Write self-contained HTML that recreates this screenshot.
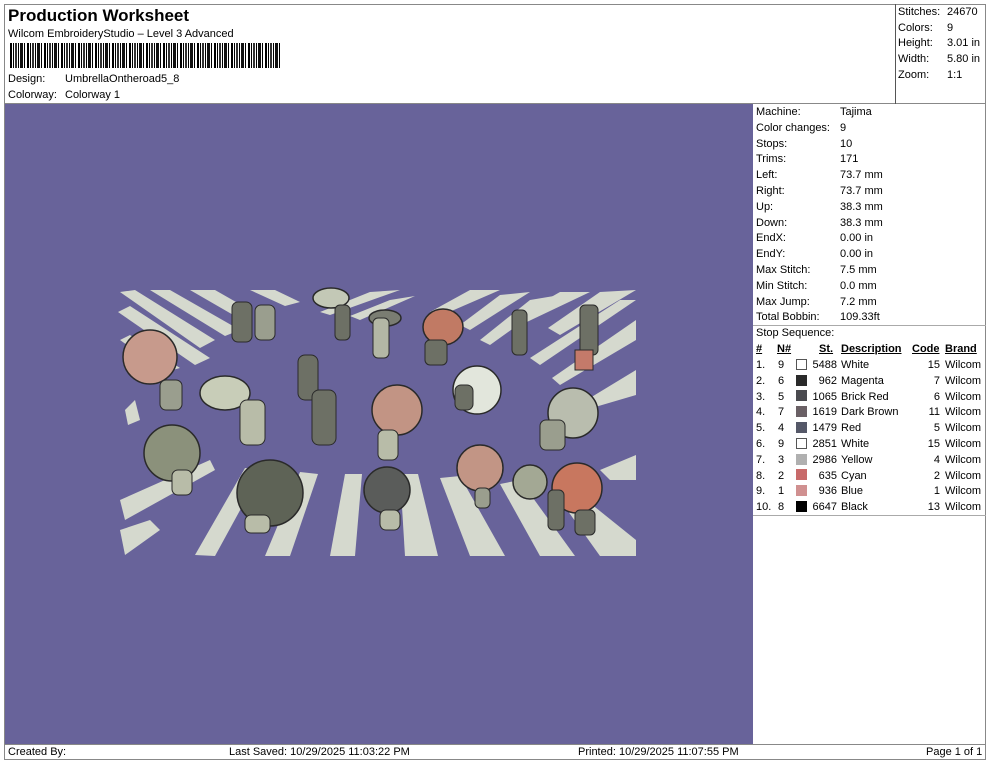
<!DOCTYPE html>
<html><head><meta charset="utf-8">
<style>
*{margin:0;padding:0;box-sizing:border-box}
body{width:990px;height:762px;background:#fff;font-family:"Liberation Sans",Arial,sans-serif;color:#000;position:relative;overflow:hidden}
.a{position:absolute;white-space:nowrap;font-size:11px;line-height:13px}
.ln{position:absolute;background:#888}
</style></head><body>
<!-- frame lines -->
<div class="ln" style="left:4px;top:4px;width:982px;height:1px"></div>
<div class="ln" style="left:4px;top:4px;width:1px;height:756px"></div>
<div class="ln" style="left:985px;top:4px;width:1px;height:756px"></div>
<div class="ln" style="left:4px;top:759px;width:982px;height:1px"></div>
<div class="ln" style="left:4px;top:103px;width:982px;height:1px"></div>
<div class="ln" style="left:895px;top:4px;width:1px;height:100px;background:#555"></div>
<div class="ln" style="left:4px;top:744px;width:982px;height:1px"></div>
<div class="ln" style="left:753px;top:325px;width:233px;height:1px;background:#aaa"></div>
<div class="ln" style="left:753px;top:515px;width:233px;height:1px;background:#aaa"></div>

<div class="a" style="left:8px;top:6px;font-size:17px;line-height:20px;font-weight:bold">Production Worksheet</div>
<div class="a" style="left:8px;top:28px">Wilcom EmbroideryStudio – Level 3 Advanced</div>
<svg style="position:absolute;left:10px;top:43px" width="272" height="25">
<defs><pattern id="bc" width="17" height="25" patternUnits="userSpaceOnUse">
<rect x="0" width="2" height="25" fill="#000"/><rect x="3" width="1" height="25" fill="#000"/><rect x="5" width="2" height="25" fill="#333"/><rect x="8" width="1" height="25" fill="#000"/><rect x="10" width="3" height="25" fill="#111"/><rect x="14" width="1" height="25" fill="#000"/>
</pattern></defs>
<rect width="272" height="25" fill="url(#bc)"/></svg>
<div class="a" style="left:8px;top:73px">Design:</div>
<div class="a" style="left:65px;top:73px">UmbrellaOntheroad5_8</div>
<div class="a" style="left:8px;top:89px">Colorway:</div>
<div class="a" style="left:65px;top:89px">Colorway 1</div>

<div class="a" style="left:898px;top:5px;line-height:15.7px">Stitches:<br>Colors:<br>Height:<br>Width:<br>Zoom:</div>
<div class="a" style="left:947px;top:5px;line-height:15.7px">24670<br>9<br>3.01 in<br>5.80 in<br>1:1</div>

<!-- design area -->
<svg style="position:absolute;left:5px;top:104px" width="748" height="640" viewBox="5 104 748 640">
<rect x="5" y="104" width="748" height="640" fill="#68639a"/>
<g fill="#dfe4d3" opacity="0.92">
<polygon points="120,292 135,290 215,340 200,348"/>
<polygon points="150,290 170,290 240,330 225,336"/>
<polygon points="190,290 215,290 250,310 235,316"/>
<polygon points="118,312 130,306 210,358 195,365"/>
<polygon points="120,340 130,335 180,368 165,372"/>
<polygon points="250,290 275,290 300,302 285,306"/>
<polygon points="370,292 400,290 330,315 320,312"/>
<polygon points="390,300 415,296 360,320 350,316"/>
<polygon points="470,290 500,290 440,316 430,312"/>
<polygon points="500,295 530,292 470,330 460,325"/>
<polygon points="530,300 560,295 490,345 480,340"/>
<polygon points="560,292 590,292 510,330 500,326"/>
<polygon points="600,292 636,290 560,335 548,328"/>
<polygon points="620,300 636,300 540,365 530,358"/>
<polygon points="636,320 636,340 560,385 552,378"/>
<polygon points="636,370 636,395 585,410 580,404"/>
<polygon points="120,500 210,460 215,470 125,520"/>
<polygon points="120,530 150,520 160,530 125,555"/>
<polygon points="195,555 245,468 262,470 215,556"/>
<polygon points="265,556 300,472 318,474 290,556"/>
<polygon points="330,556 345,474 362,474 355,556"/>
<polygon points="405,556 400,474 418,474 438,556"/>
<polygon points="470,556 440,478 460,476 505,556"/>
<polygon points="540,556 500,484 520,480 575,556"/>
<polygon points="600,556 560,500 580,495 636,540 636,556"/>
<polygon points="600,470 636,455 636,480 610,480"/>
<polygon points="125,410 135,400 140,420 128,425"/>
</g>
<g stroke="#2a2a2a" stroke-width="1.5">
<circle cx="150" cy="357" r="27" fill="#c79a8c"/>
<ellipse cx="225" cy="393" rx="25" ry="17" fill="#c8cdb8"/>
<circle cx="172" cy="453" r="28" fill="#8b917b"/>
<circle cx="270" cy="493" r="33" fill="#5e6356"/>
<circle cx="387" cy="490" r="23" fill="#5a5c5a"/>
<circle cx="397" cy="410" r="25" fill="#c29484"/>
<circle cx="477" cy="390" r="24" fill="#e2e6dc"/>
<circle cx="573" cy="413" r="25" fill="#b9bdae"/>
<circle cx="480" cy="468" r="23" fill="#c29585"/>
<circle cx="530" cy="482" r="17" fill="#a3a894"/>
<circle cx="577" cy="488" r="25" fill="#c8775f"/>
<ellipse cx="331" cy="298" rx="18" ry="10" fill="#c3c8b6"/>
<ellipse cx="443" cy="327" rx="20" ry="18" fill="#c17a64"/>
<ellipse cx="385" cy="318" rx="16" ry="8" fill="#7a7d72"/>
</g>
<g fill="#6d7065" stroke="#2a2a2a" stroke-width="1">
<rect x="232" y="302" width="20" height="40" rx="6"/>
<rect x="255" y="305" width="20" height="35" rx="6" fill="#9a9e8e"/>
<rect x="335" y="305" width="15" height="35" rx="5"/>
<rect x="373" y="318" width="16" height="40" rx="5" fill="#b3b7a5"/>
<rect x="425" y="340" width="22" height="25" rx="5"/>
<rect x="512" y="310" width="15" height="45" rx="5"/>
<rect x="580" y="305" width="18" height="50" rx="5"/>
<rect x="575" y="350" width="18" height="20" fill="#c47a6a"/>
<rect x="298" y="355" width="20" height="45" rx="7"/>
<rect x="312" y="390" width="24" height="55" rx="7"/>
<rect x="240" y="400" width="25" height="45" rx="7" fill="#b8bca8"/>
<rect x="160" y="380" width="22" height="30" rx="6" fill="#9a9e8e"/>
<rect x="378" y="430" width="20" height="30" rx="6" fill="#b8bca8"/>
<rect x="540" y="420" width="25" height="30" rx="6" fill="#9a9e8e"/>
<rect x="455" y="385" width="18" height="25" rx="6"/>
<rect x="172" y="470" width="20" height="25" rx="6" fill="#b8bca8"/>
<rect x="245" y="515" width="25" height="18" rx="6" fill="#b8bca8"/>
<rect x="380" y="510" width="20" height="20" rx="6" fill="#b8bca8"/>
<rect x="475" y="488" width="15" height="20" rx="5" fill="#9a9e8e"/>
<rect x="548" y="490" width="16" height="40" rx="5"/>
<rect x="575" y="510" width="20" height="25" rx="5"/>
</g>
</svg>

<div class="a" style="left:756px;top:105px;line-height:15.8px">Machine:<br>Color changes:<br>Stops:<br>Trims:<br>Left:<br>Right:<br>Up:<br>Down:<br>EndX:<br>EndY:<br>Max Stitch:<br>Min Stitch:<br>Max Jump:<br>Total Bobbin:</div>
<div class="a" style="left:840px;top:105px;line-height:15.8px">Tajima<br>9<br>10<br>171<br>73.7 mm<br>73.7 mm<br>38.3 mm<br>38.3 mm<br>0.00 in<br>0.00 in<br>7.5 mm<br>0.0 mm<br>7.2 mm<br>109.33ft</div>
<div class="a" style="left:756px;top:327px">Stop Sequence:</div>
<div class="a" style="left:756px;top:343px;font-weight:bold;text-decoration:underline">#</div>
<div class="a" style="left:777px;top:343px;font-weight:bold;text-decoration:underline">N#</div>
<div class="a" style="left:819px;top:343px;font-weight:bold;text-decoration:underline">St.</div>
<div class="a" style="left:841px;top:343px;font-weight:bold;text-decoration:underline">Description</div>
<div class="a" style="left:912px;top:343px;font-weight:bold;text-decoration:underline">Code</div>
<div class="a" style="left:945px;top:343px;font-weight:bold;text-decoration:underline">Brand</div>
<div class="a" style="left:756px;top:358px;line-height:15.8px">1.<br>2.<br>3.<br>4.<br>5.<br>6.<br>7.<br>8.<br>9.<br>10.</div>
<div class="a" style="left:778px;top:358px;line-height:15.8px">9<br>6<br>5<br>7<br>4<br>9<br>3<br>2<br>1<br>8</div>
<div class="a" style="left:808px;top:358px;line-height:15.8px;text-align:right;width:29px">5488<br>962<br>1065<br>1619<br>1479<br>2851<br>2986<br>635<br>936<br>6647</div>
<div class="a" style="left:841px;top:358px;line-height:15.8px">White<br>Magenta<br>Brick Red<br>Dark Brown<br>Red<br>White<br>Yellow<br>Cyan<br>Blue<br>Black</div>
<div class="a" style="left:916px;top:358px;line-height:15.8px;text-align:right;width:24px">15<br>7<br>6<br>11<br>5<br>15<br>4<br>2<br>1<br>13</div>
<div class="a" style="left:945px;top:358px;line-height:15.8px">Wilcom<br>Wilcom<br>Wilcom<br>Wilcom<br>Wilcom<br>Wilcom<br>Wilcom<br>Wilcom<br>Wilcom<br>Wilcom</div>
<div style="position:absolute;left:796px;top:359px;width:11px;height:11px;border:1px solid #555;background:#fff"></div>
<div style="position:absolute;left:796px;top:375px;width:11px;height:11px;background:#2a2a2a"></div>
<div style="position:absolute;left:796px;top:390px;width:11px;height:11px;background:#4a4a4f"></div>
<div style="position:absolute;left:796px;top:406px;width:11px;height:11px;background:#6a6065"></div>
<div style="position:absolute;left:796px;top:422px;width:11px;height:11px;background:#555868"></div>
<div style="position:absolute;left:796px;top:438px;width:11px;height:11px;border:1px solid #555;background:#fff"></div>
<div style="position:absolute;left:796px;top:454px;width:11px;height:11px;background:#b0b0b0"></div>
<div style="position:absolute;left:796px;top:469px;width:11px;height:11px;background:#c86a6a"></div>
<div style="position:absolute;left:796px;top:485px;width:11px;height:11px;background:#d09090"></div>
<div style="position:absolute;left:796px;top:501px;width:11px;height:11px;background:#000"></div>

<div class="a" style="left:8px;top:746px">Created By:</div>
<div class="a" style="left:229px;top:746px">Last Saved: 10/29/2025 11:03:22 PM</div>
<div class="a" style="left:578px;top:746px">Printed: 10/29/2025 11:07:55 PM</div>
<div class="a" style="left:926px;top:746px">Page 1 of 1</div>
</body></html>
